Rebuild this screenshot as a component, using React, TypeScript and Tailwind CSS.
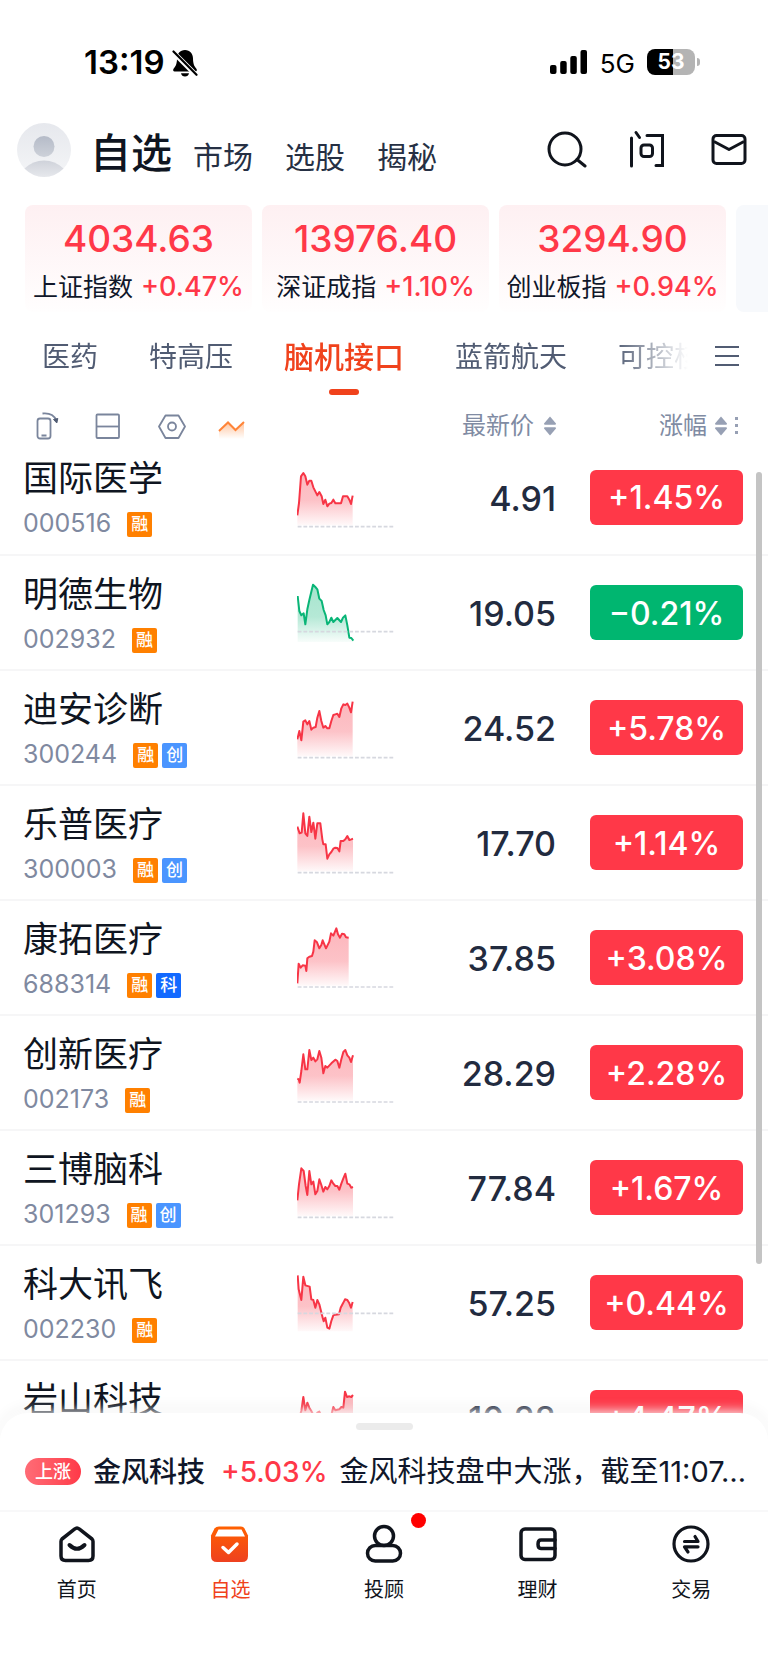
import { useState } from 'react';
import type { ReactNode } from 'react';

interface Stock {
  name: string;
  code: string;
  tags: string[];
  price: string;
  change: string;
  points: string;
  base: number; // y of the previous close line
  fillTo: number;
}

const indices = [
  { name: '上证指数', value: '4034.63', change: '+0.47%' },
  { name: '深证成指', value: '13976.40', change: '+1.10%' },
  { name: '创业板指', value: '3294.90', change: '+0.94%' },
];

const groups = ['医药', '特高压', '脑机接口', '蓝箭航天', '可控核聚变'];

const tagColors: Record<string, string> = {
  融: 'bg-[#ff8000]',
  创: 'bg-[#4a95ff]',
  科: 'bg-[#1269ff]',
};

const stocks: Stock[] = [
  {
    name: '国际医学', code: '000516', tags: ['融'], price: '4.91', change: '+1.45%', base: 260, fillTo: 256,
    points: '1,226 6,189 12,109 19,99 25,109 31,134 37,122 43,122 49,142 61,166 67,156 74,169 79,192 85,179 91,199 97,191 103,189 109,179 115,190 132,190 138,169 151,169 157,179 162,192 167,167',
  },
  {
    name: '明德生物', code: '002932', tags: ['融'], price: '19.05', change: '−0.21%', base: 227, fillTo: 258,
    points: '2,120 7,165 13,178 20,172 25,205 31,160 37,132 48,86 55,93 61,100 67,128 74,135 80,162 86,178 91,205 97,198 103,185 109,198 121,186 132,198 138,185 145,178 151,208 157,245 163,246 169,254',
  },
  {
    name: '迪安诊断', code: '300244', tags: ['融', '创'], price: '24.52', change: '+5.78%', base: 260, fillTo: 256,
    points: '1,205 7,180 13,208 19,152 25,148 31,160 37,150 43,176 49,170 56,168 61,140 67,120 73,150 79,170 85,165 91,172 97,172 103,150 109,132 115,130 121,128 127,138 133,112 139,100 145,102 151,98 157,110 162,124 167,92',
  },
  {
    name: '乐普医疗', code: '300003', tags: ['融', '创'], price: '17.70', change: '+1.14%', base: 260, fillTo: 256,
    points: '1,122 8,142 14,140 19,82 25,142 31,150 37,92 43,138 49,110 55,158 61,112 70,112 76,160 79,175 86,175 91,218 97,205 103,198 109,188 115,185 121,186 127,196 131,165 139,165 145,160 151,150 157,162 163,160 168,158',
  },
  {
    name: '康拓医疗', code: '688314', tags: ['融', '科'], price: '37.85', change: '+3.08%', base: 258, fillTo: 254,
    points: '1,247 5,188 11,200 17,193 25,194 28,210 31,172 37,167 45,165 49,152 53,118 60,124 67,142 73,132 77,118 87,142 97,122 102,97 109,104 118,82 123,100 129,110 135,98 142,100 147,109 155,110',
  },
  {
    name: '创新医疗', code: '002173', tags: ['融'], price: '28.29', change: '+2.28%', base: 258, fillTo: 254,
    points: '1,188 5,190 8,200 13,165 19,115 25,160 31,160 37,102 43,132 49,125 55,136 61,130 67,105 73,125 79,172 85,150 91,155 103,142 115,131 121,135 127,155 133,130 139,108 145,102 151,118 157,125 162,138 168,118',
  },
  {
    name: '三博脑科', code: '301293', tags: ['融', '创'], price: '77.84', change: '+1.67%', base: 259, fillTo: 255,
    points: '1,208 6,160 13,112 20,120 26,165 31,192 37,120 43,160 49,152 55,190 61,180 67,145 73,162 79,182 85,168 91,175 97,165 103,148 109,158 115,165 121,165 127,176 133,158 139,142 145,128 151,158 157,160 163,170 168,168',
  },
  {
    name: '科大讯飞', code: '002230', tags: ['融'], price: '57.25', change: '+0.44%', base: 202, fillTo: 256,
    points: '2,88 5,130 13,162 19,92 25,118 38,122 43,160 49,162 55,185 61,162 67,175 72,195 77,215 80,226 85,215 91,245 97,248 103,225 109,208 115,206 126,205 131,185 138,172 144,160 151,162 157,172 162,185 167,168',
  },
  {
    name: '岩山科技', code: '002195', tags: ['融'], price: '10.28', change: '+4.47%', base: 300, fillTo: 296,
    points: '6,160 8,165 13,150 19,108 25,148 31,125 37,140 43,150 49,162 55,170 61,155 67,152 73,165 91,190 103,162 109,138 115,148 127,145 133,138 139,140 144,92 150,108 157,106 163,108 168,102',
  },
];

function Sparkline({ stock }: { stock: Stock }) {
  const pts = stock.points.split(' ');
  const first = pts[0].split(',')[0];
  const last = pts[pts.length - 1].split(',')[0];
  const color = stock.change.startsWith('+') ? '#f73546' : '#09b577';
  const id = `fill-${stock.code}`;

  return (
    <svg className="block h-[110px] w-[99px]" viewBox="0 0 297 330" aria-hidden="true">
      <defs>
        <linearGradient id={id} gradientUnits="userSpaceOnUse" x1="0" y1="90" x2="0" y2={stock.fillTo}>
          <stop offset="0" stopColor={color} stopOpacity="0.36" />
          <stop offset="0.55" stopColor={color} stopOpacity="0.3" />
          <stop offset="1" stopColor={color} stopOpacity="0.03" />
        </linearGradient>
      </defs>
      <polygon points={`${first},${stock.fillTo} ${stock.points} ${last},${stock.fillTo}`} fill={`url(#${id})`} />
      <polyline points={stock.points} fill="none" stroke={color} strokeWidth="6" strokeLinejoin="round" />
      <path d={`M2 ${stock.base}H290`} stroke="#d6d8df" strokeWidth="5" strokeDasharray="11.5 5.7" />
    </svg>
  );
}

function SortArrows() {
  return (
    <svg className="h-5 w-3" viewBox="0 0 12 20" fill="#97a0b4" aria-hidden="true">
      <path d="M6 0.500L12 7.500Q12 8.800 11 8.800H1Q0 8.800 0 7.500Z" />
      <path d="M6 19.500L12 12.500Q12 11.200 11 11.200H1Q0 11.200 0 12.500Z" />
    </svg>
  );
}

function StatusBar() {
  return (
    <div className="mt-6 flex h-[76px] items-center justify-between pr-[68px] pl-[84px]">
      <div className="flex items-center gap-[7px] pt-[2px]">
        <span className="text-[33px] font-semibold text-black">13:19</span>
        <svg className="h-7 w-[26px]" viewBox="0 0 26 28" aria-label="静音">
          <path d="M13 1C8 1 5 5 5 9.5C5 15 3.6 17.5 1.4 20Q.6 22.4 2.6 22.4H23.4Q25.4 22.4 24.6 20C22.4 17.5 21 15 21 9.5C21 5 18 1 13 1ZM9 24.2H17Q16.200 27.400 13 27.400Q9.800 27.400 9 24.200Z" />
          <path d="M0 2L25 27" stroke="#fff" strokeWidth="5" />
          <path d="M1.500 2.500L24.500 25.800" stroke="#000" strokeWidth="2.200" strokeLinecap="round" />
        </svg>
      </div>
      <div className="flex items-center">
        <svg className="h-6 w-[38px]" viewBox="0 0 38 24" aria-label="信号">
          <rect x="0" y="15" width="6.500" height="9" rx="2" />
          <rect x="10.200" y="11" width="6.500" height="13" rx="2" />
          <rect x="20.300" y="6" width="6.500" height="18" rx="2" />
          <rect x="30.500" y="0" width="6.500" height="24" rx="2" />
        </svg>
        <span className="ml-3 pt-[2px] text-[26px] text-black">5G</span>
        <div className="ml-3 flex items-center gap-[2px]">
          <div className="flex h-[26px] w-12 items-center justify-center rounded-lg bg-[linear-gradient(90deg,#000_54%,#b4b4b4_54%)] text-[21px] font-bold text-white">
            53
          </div>
          <div className="h-2 w-[3px] rounded-r-full bg-[#b4b4b4]" />
        </div>
      </div>
    </div>
  );
}

function Header() {
  return (
    <header className="flex h-[100px] items-center pr-[19px] pl-[17px]">
      <svg className="h-[54px] w-[54px] shrink-0" viewBox="0 0 54 54" role="img" aria-label="头像">
        <defs>
          <linearGradient id="avatar" x1="0" y1="0" x2="0" y2="1">
            <stop stopColor="#e6e8ed" />
            <stop offset="1" stopColor="#f4f5f7" />
          </linearGradient>
          <linearGradient id="person" x1="0" y1="0" x2="0" y2="1">
            <stop stopColor="#b5bbc8" />
            <stop offset="1" stopColor="#cdd1d9" />
          </linearGradient>
          <linearGradient id="shoulder" x1="0" y1="0" x2="0" y2="1">
            <stop stopColor="#cfd2da" />
            <stop offset="1" stopColor="#e6e8ec" />
          </linearGradient>
        </defs>
        <circle cx="27" cy="27" r="27" fill="url(#avatar)" />
        <circle cx="27" cy="23.500" r="10.500" fill="url(#person)" />
        <path d="M7.500 45.500Q16 37.500 27 37.500T46.500 45.500Q38 54 27 54T7.500 45.500Z" fill="url(#shoulder)" />
      </svg>
      <nav className="ml-[19px] flex items-baseline pt-[6px]">
        <button className="text-[41px] leading-[54px] font-medium text-[#0f1521]">自选</button>
        <button className="ml-[21px] text-[30px] text-[#263044]">市场</button>
        <button className="ml-8 text-[30px] text-[#263044]">选股</button>
        <button className="ml-8 text-[30px] text-[#263044]">揭秘</button>
      </nav>
      <div className="ml-auto flex items-center gap-[41px]">
        <button aria-label="搜索">
          <svg className="h-10 w-10" viewBox="0 0 40 40" fill="none" stroke="#10141c" strokeWidth="3" strokeLinecap="round">
            <circle cx="18" cy="19" r="16" />
            <path d="M30 29.500L38 36" />
          </svg>
        </button>
        <button aria-label="问答">
          <svg className="h-10 w-10" viewBox="0 0 40 40" fill="none" stroke="#10141c" strokeWidth="3" strokeLinecap="round">
            <path d="M3.500 8V36M8 2.500L11.500 7.500M19 5.500H34.500V35.500H28" />
            <rect x="13" y="15" width="11.500" height="11.500" rx="3" />
          </svg>
        </button>
        <button aria-label="消息">
          <svg className="h-10 w-10" viewBox="0 0 40 40" fill="none" stroke="#10141c" strokeWidth="3" strokeLinejoin="round">
            <rect x="4" y="5.500" width="32" height="28" rx="3.500" />
            <path d="M5 11.500L20 19.500L35 11.500" />
          </svg>
        </button>
      </div>
    </header>
  );
}

function IndexCards() {
  return (
    <section className="mt-[5px] flex gap-[10px] overflow-hidden pl-[25px]">
      {indices.map((item) => (
        <div key={item.name} className="flex h-[107px] w-[227px] shrink-0 flex-col items-center rounded-lg bg-gradient-to-b from-[#fef0f2] to-[#fffefe] pt-[11px]">
          <div className="text-[37px] leading-[46px] font-medium text-[#ff3848]">{item.value}</div>
          <div className="flex items-baseline gap-2 leading-[50px] whitespace-nowrap">
            <span className="text-[25px] text-[#10172a]">{item.name}</span>
            <span className="text-[27px] font-medium text-[#ff3848]">{item.change}</span>
          </div>
        </div>
      ))}
      <div className="h-[107px] w-[227px] shrink-0 rounded-lg bg-[#f7f9fc]" />
    </section>
  );
}

function GroupTabs() {
  const [active, setActive] = useState('脑机接口');

  return (
    <nav className="flex h-[90px] items-center">
      <div className="flex h-full min-w-0 flex-1 items-center gap-[51px] overflow-hidden pl-[42px] [mask-image:linear-gradient(to_right,#000_calc(100%-75px),transparent_calc(100%-2px))]">
        {groups.map((group) => (
          <button
            key={group}
            onClick={() => setActive(group)}
            className={
              group === active
                ? 'relative h-full shrink-0 text-[30px] font-medium text-[#f0421c]'
                : 'h-full shrink-0 text-[28px] text-[#515c73]'
            }
          >
            {group}
            {group === active && (
              <span className="absolute bottom-[7px] left-1/2 h-[6px] w-[30px] -translate-x-1/2 rounded-sm bg-[#f0421c]" />
            )}
          </button>
        ))}
      </div>
      <button aria-label="全部分组" className="mr-[29px] ml-[25px] shrink-0">
        <svg className="h-6 w-6" viewBox="0 0 24 24" stroke="#515c73" strokeWidth="2">
          <path d="M0 2H24M0 11H24M0 20H24" />
        </svg>
      </button>
    </nav>
  );
}

function ListTools() {
  return (
    <div className="flex h-7 items-center pl-[35px]">
      <button aria-label="横屏">
        <svg className="h-7 w-7" viewBox="0 0 28 28" fill="none" stroke="#7a859c" strokeWidth="1.800">
          <rect x="2.500" y="6.500" width="13" height="20" rx="2.500" />
          <path d="M6.500 23.500H11.500M7.500 1.500Q18 .5 21 8" />
          <path d="M18.500 7.500L22.800 6.500L21.800 11Z" fill="#515c73" stroke="#515c73" strokeWidth="1" />
        </svg>
      </button>
      <button aria-label="布局" className="ml-[31px]">
        <svg className="h-7 w-7" viewBox="0 0 28 28" fill="none" stroke="#7a859c" strokeWidth="1.800">
          <rect x="2.500" y="2.500" width="22.500" height="23.500" rx="1" />
          <path d="M2.500 14.500H25" />
        </svg>
      </button>
      <button aria-label="设置" className="ml-9">
        <svg className="h-7 w-7" viewBox="0 0 28 28" fill="none" stroke="#7a859c" strokeWidth="1.800" strokeLinejoin="round">
          <path d="M7.500 3.500H20.500L27 14.500L20.500 26H7.500L1 14.500Z" />
          <circle cx="14" cy="14.500" r="4" />
        </svg>
      </button>
      <button aria-label="分时图" className="ml-8">
        <svg className="h-7 w-7" viewBox="0 0 28 28">
          <defs>
            <linearGradient id="trend" x1="0" y1="0" x2="0" y2="1">
              <stop stopColor="#ff8a3c" stopOpacity="0.5" />
              <stop offset="1" stopColor="#ff8a3c" stopOpacity="0" />
            </linearGradient>
          </defs>
          <path d="M1 19L10 10.500L17.500 18L26 10V27H1Z" fill="url(#trend)" />
          <path d="M1 19L10 10.500L17.500 18L26 10" fill="none" stroke="#ff8438" strokeWidth="2" />
        </svg>
      </button>
    </div>
  );
}

function StockRow({ stock }: { stock: Stock }) {
  return (
    <tr className="h-[115px] border-b-2 border-[#f6f6f7]">
      <td className="pt-[15px] pl-[23px] align-top">
        <div className="text-[35px] leading-[47px] text-[#0f1521]">{stock.name}</div>
        <div className="flex h-11 items-center">
          <span className="mr-4 text-[25px] text-[#7f89a0]">{stock.code}</span>
          <span className="flex gap-1">
            {stock.tags.map((tag) => (
              <span key={tag} className={`flex h-[25px] w-[25px] items-center justify-center rounded-xs text-[17px] leading-none font-medium text-white ${tagColors[tag]}`}>
                {tag}
              </span>
            ))}
          </span>
        </div>
      </td>
      <td className="align-top">
        <Sparkline stock={stock} />
      </td>
      <td className="pt-[2px] pr-[11px] text-right text-[34px] font-medium text-[#222b3f]">{stock.price}</td>
      <td className="pr-[25px]">
        <div
          className={`ml-auto flex h-[55px] w-[153px] items-center justify-center rounded-md pt-[2px] text-[32px] font-medium text-white ${
            stock.change.startsWith('+') ? 'bg-[#ff3848]' : 'bg-[#00b670]'
          }`}
        >
          {stock.change}
        </div>
      </td>
    </tr>
  );
}

function StockList() {
  return (
    <main className="relative min-h-0 flex-1 overflow-hidden">
      <table className="w-full table-fixed">
        <colgroup>
          <col className="w-[297px]" />
          <col className="w-[100px]" />
          <col />
          <col className="w-[201px]" />
        </colgroup>
        <thead className="text-[24px] text-[#808ba3]">
          <tr className="h-[38px]">
            <th colSpan={2} className="align-bottom font-normal">
              <ListTools />
            </th>
            <th className="pr-[11px] align-bottom font-normal">
              <button className="ml-auto flex h-7 items-center gap-[10px]">
                最新价
                <SortArrows />
              </button>
            </th>
            <th className="pr-[30px] align-bottom font-normal">
              <button className="ml-auto flex h-7 items-center gap-2">
                涨幅
                <SortArrows />
                <svg className="h-5 w-[3px]" viewBox="0 0 3 20" fill="#97a0b4" aria-hidden="true">
                  <rect y="1" width="3" height="3" />
                  <rect y="8" width="3" height="3" />
                  <rect y="15" width="3" height="3" />
                </svg>
              </button>
            </th>
          </tr>
        </thead>
        <tbody>
          {stocks.map((stock) => (
            <StockRow key={stock.code} stock={stock} />
          ))}
        </tbody>
      </table>
      {/* Scroll thumb */}
      <div className="absolute top-[70px] right-[6px] h-[792px] w-[6px] rounded-full bg-[#c4c4c4]" />
    </main>
  );
}

function NavItem({ label, active, badge, children }: { label: string; active?: boolean; badge?: boolean; children: ReactNode }) {
  return (
    <a href="#" className={`flex flex-1 flex-col items-center gap-3 text-[20px] leading-[28px] ${active ? 'text-[#f0421c]' : 'text-[#10141c]'}`}>
      <span className="relative">
        <svg className="h-10 w-10" viewBox="0 0 40 40" fill="none" stroke="#10141c" strokeWidth="3.500" strokeLinecap="round" strokeLinejoin="round">
          {children}
        </svg>
        {badge && <span className="absolute -top-[11px] -right-[22px] h-[15px] w-[15px] rounded-full bg-[#ff0000]" />}
      </span>
      {label}
    </a>
  );
}

function BottomSheet() {
  return (
    <footer className="relative -mt-6 shrink-0 rounded-t-[28px] bg-white pt-[10px] shadow-[0_-2px_12px_rgba(255,255,255,0.9),0_-4px_16px_rgba(0,0,0,0.06)]">
      <div className="mx-auto h-[7px] w-[57px] rounded-full bg-[#ebebeb]" />
      <div className="flex h-20 items-center pt-[3px] pr-[22px] pl-[25px] text-[28px] whitespace-nowrap">
        <span className="flex h-[27px] w-14 shrink-0 items-center justify-center rounded-full bg-gradient-to-r from-[#ff6b76] to-[#ff3848] text-[18px] font-medium text-white">
          上涨
        </span>
        <span className="ml-3 font-medium text-[#10172a]">金风科技</span>
        <span className="ml-4 font-medium text-[#ff3848]">+5.03%</span>
        <span className="ml-3 text-[29px] text-[#10172a]">金风科技盘中大涨，截至11:07…</span>
      </div>
      <nav className="flex h-[160px] border-t-2 border-[#f8f8f9] pt-3">
        <NavItem label="首页">
          <path d="M20 4Q21 4 22.500 5.200L35 15Q36 16 36 17.500V32Q36 36.500 31.500 36.500H8.500Q4 36.500 4 32V17.500Q4 16 5 15L17.500 5.200Q19 4 20 4Z" />
          <path d="M12.500 21Q20 28.500 27.500 21" strokeWidth="4" />
        </NavItem>
        <NavItem label="自选" active>
          <defs>
            <linearGradient id="box" x1="0" y1="0" x2="0" y2="1">
              <stop stopColor="#ff6000" />
              <stop offset="1" stopColor="#ee4120" />
            </linearGradient>
          </defs>
          <path d="M9 2.500H31Q33.500 2.500 34.500 4.500L38 11.500V32Q38 38 32 38H7Q1 38 1 32V11.500L4.500 4.500Q6 2.500 9 2.500Z" fill="url(#box)" stroke="none" />
          <path d="M8.500 5.500H31.500L35 12.500H5Z" fill="#fff" stroke="none" />
          <path d="M13 23.500L18.500 28.500L27 20" stroke="#fff" strokeWidth="3.500" />
        </NavItem>
        <NavItem label="投顾" badge>
          <circle cx="20" cy="12" r="9.500" />
          <rect x="3.500" y="21.500" width="33" height="15.500" rx="7.750" />
        </NavItem>
        <NavItem label="理财">
          <rect x="3" y="5" width="34" height="30.500" rx="4" />
          <path d="M37 16H23Q20 16 20 20.200T23 24.500H37" />
        </NavItem>
        <NavItem label="交易">
          <circle cx="20" cy="20" r="17" strokeWidth="3.200" />
          <path d="M13.500 17.500H27L24 12.500M27 22.800H13.500L17 28" strokeWidth="3.200" />
        </NavItem>
      </nav>
    </footer>
  );
}

export default function App() {
  return (
    <div
      lang="zh-CN"
      className="flex h-screen flex-col overflow-hidden bg-white font-['Inter','Noto_Sans_CJK_SC',sans-serif]"
    >
      <StatusBar />
      <Header />
      <IndexCards />
      <GroupTabs />
      <StockList />
      <BottomSheet />
    </div>
  );
}
